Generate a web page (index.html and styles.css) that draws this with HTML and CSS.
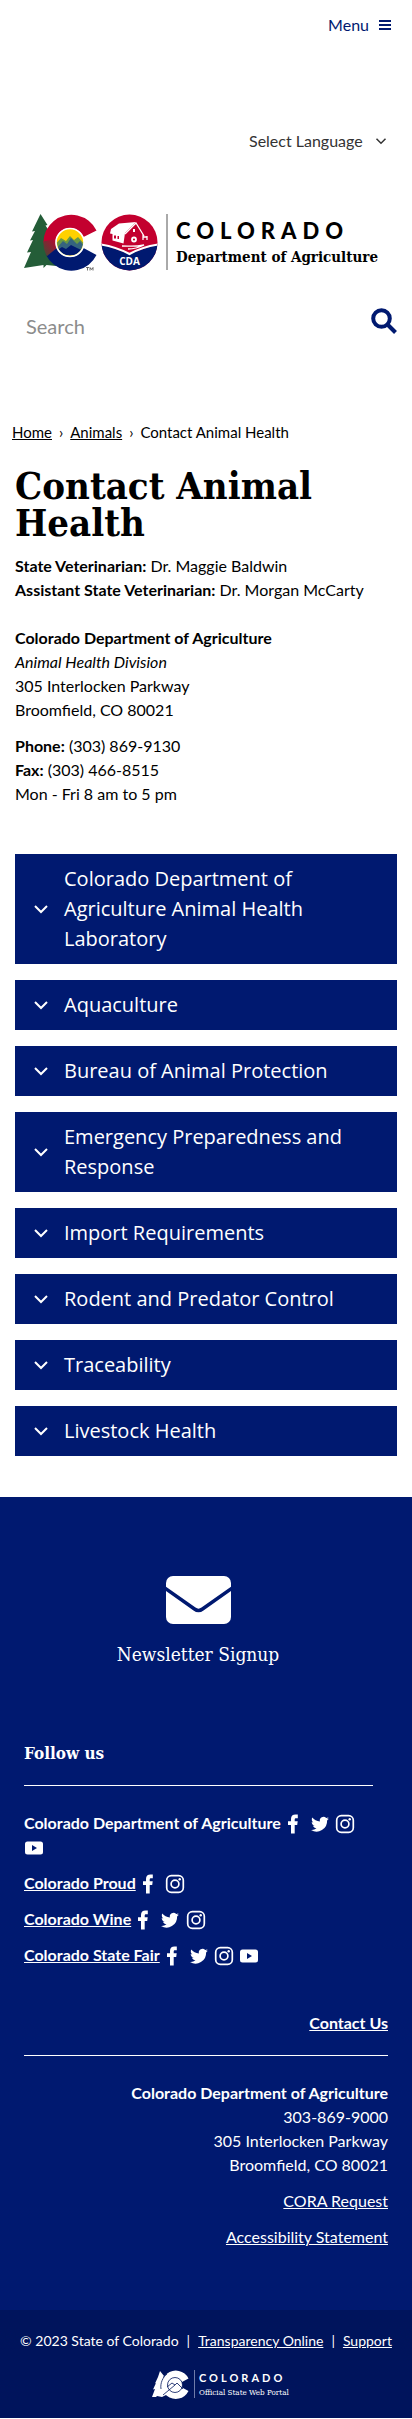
FILE: index.html
```html
<!DOCTYPE html>
<html lang="en">
<head>
<meta charset="utf-8">
<meta name="viewport" content="width=device-width, initial-scale=1">
<title>Contact Animal Health | Colorado Department of Agriculture</title>
<link rel="stylesheet" href="styles.css">
</head>
<body>
<svg class="sprite" aria-hidden="true">
  <symbol id="facebook" viewBox="0 0 20 20"><path d="M6 19.500V11H3V7.200h3V5C6 2 7.700.6 10.500.6h2.300v3.700h-1.700c-1 0-1.400.5-1.400 1.400v1.500h3l-.5 3.800H9.700v8.500z"/></symbol>
  <symbol id="twitter" viewBox="0 0 20 20"><path d="M19 4.600c-.7.300-1.400.5-2.100.6.800-.5 1.300-1.200 1.600-2-.7.400-1.500.7-2.300.9A3.700 3.700 0 0 0 9.900 7.500C6.800 7.300 4.100 5.900 2.300 3.600c-1 1.700-.5 3.900 1.100 4.900-.6 0-1.200-.2-1.700-.5 0 1.800 1.300 3.400 3 3.700-.5.100-1.100.2-1.700.1.500 1.400 1.800 2.500 3.500 2.500A7.500 7.500 0 0 1 1 15.900a10.500 10.500 0 0 0 16.100-9.400c.7-.5 1.400-1.100 1.900-1.900z"/></symbol>
  <symbol id="instagram" viewBox="0 0 20 20"><g fill="none" stroke="currentColor" stroke-width="1.700"><rect x="1.700" y="1.700" width="16.600" height="16.600" rx="4.600"/><circle cx="10" cy="10" r="3.900"/></g><circle cx="14.700" cy="5.300" r="1.200"/></symbol>
  <symbol id="youtube" viewBox="0 0 20 20"><path fill-rule="evenodd" d="M3.500 3.500h13a2.500 2.500 0 0 1 2.500 2.500v8a2.500 2.500 0 0 1-2.500 2.500h-13A2.500 2.500 0 0 1 1 14V6a2.500 2.500 0 0 1 2.500-2.500zM8 7v6l5-3z"/></symbol>
  <symbol id="chevron" viewBox="0 0 16 16"><path d="M2 5l6 6 6-6" fill="none" stroke="currentColor" stroke-width="2"/></symbol>
</svg>

<header class="header">
  <div class="topbar">
    <button class="menu" type="button">Menu
      <svg class="menu-icon" viewBox="0 0 12 12" aria-hidden="true"><path d="M0 2h12M0 6h12M0 10h12" stroke="currentColor" stroke-width="2"/></svg>
    </button>
  </div>
  <div class="language">
    <select aria-label="Select Language"><option>Select Language</option></select>
    <svg class="language-icon" aria-hidden="true"><use href="#chevron"/></svg>
  </div>
  <a class="brand" href="#">
    <svg class="brand-logo" viewBox="0 0 354 58" role="img" aria-label="Colorado Department of Agriculture">
      <defs>
        <clipPath id="c-inner"><circle cx="46" cy="28.500" r="13"/></clipPath>
        <clipPath id="c-ring"><path d="M72.500 16.500A28 28 0 1 0 72.500 41L59.500 34A14.500 14.500 0 1 1 59.500 23z"/></clipPath>
        <clipPath id="cda"><circle cx="105.500" cy="28.500" r="28"/></clipPath>
        <linearGradient id="fade" x1="0" y1="1" x2="1" y2="0"><stop offset="0" stop-color="#245d38"/><stop offset="1" stop-color="#c3002f"/></linearGradient>
      </defs>
      <path fill="#245d38" d="M16.500 0l7 11-2 .5 6 9-3 1 8 12 8 17-8 1.500-10-1-3 3v-3L0 54l7-16-4 .5 6-12.500-3 .5 5-9.500-3 .5z"/>
      <g clip-path="url(#c-ring)">
        <path fill="#c3002f" d="M17 0h60v28.500H17z"/>
        <path fill="#001970" d="M17 58V44l14-12 46-3.500V58z"/>
        <path fill="url(#fade)" d="M17 47V28l14-3 3 8z"/>
      </g>
      <circle cx="46" cy="28.500" r="14" fill="#ffd100"/>
      <g clip-path="url(#c-inner)">
        <path fill="#6b9a45" d="M30 32l7-8 5 3 4-5 4 4 4-3 9 10v6H30z"/>
        <path fill="#35647e" d="M30 37l9-10 4 3 4-6 6 6 3-3 8 10v4H30z"/>
        <path fill="#001970" d="M30 38l8-5 4 2 5-4 6 3 9 4v8H30z"/>
      </g>
      <circle cx="46" cy="28.500" r="14" fill="none" stroke="#fff" stroke-width="1.600"/>
      <path d="M62 53.500h3M63.500 53.500v3M66 56.500v-3l1.500 2 1.500-2v3" fill="none" stroke="#333" stroke-width=".7"/>
      <g clip-path="url(#cda)">
        <path fill="#c3002f" d="M77 0h57v58H77z"/>
        <path fill="#001970" d="M77 30l28.500 10L134 30v28H77z"/>
        <path d="M77 30.500c12 2 20 5 28.500 9.500 8-4.500 16-7.500 28.500-9.500" fill="none" stroke="#fff" stroke-width="2.200"/>
      </g>
      <path fill="#fff" d="M87 15l8-5.500 17-1.500-11 11-1.500 10.500-11-3V20l-2.500-.5z"/>
      <path d="M101 20l11-11 8 13M119 20v6M123 22v4M119 23h4M98 32c8 0 12 1 22-1-6 3-13 4-16 4" fill="none" stroke="#fff" stroke-width="1.300"/>
      <path d="M90 21.500h2v3h-2zM93.500 22h1.500v3h-1.500z" fill="#c3002f"/>
      <circle cx="110" cy="25.500" r="2" fill="none" stroke="#fff" stroke-width="1.800"/><path d="M110 15v3" stroke="#fff" stroke-width="2"/>
      <text class="logo-cda" x="105.500" y="51" text-anchor="middle">CDA</text>
      <path d="M143 0v56" stroke="#555" stroke-width="1"/>
      <text class="logo-state" x="152" y="25">COLORADO</text>
      <text class="logo-dept" x="152" y="48">Department of Agriculture</text>
    </svg>
  </a>
  <form class="search" role="search">
    <input type="search" placeholder="Search" aria-label="Search">
    <button type="submit" aria-label="Submit search">
      <svg viewBox="0 0 26 26" aria-hidden="true"><g fill="none" stroke="currentColor" stroke-width="4"><circle cx="10.500" cy="10.500" r="8.300"/><path d="M16.500 16.500l8 8"/></g></svg>
    </button>
  </form>
</header>

<nav class="breadcrumb" aria-label="Breadcrumb">
  <a href="#">Home</a><span>›</span><a href="#">Animals</a><span>›</span><span>Contact Animal Health</span>
</nav>

<main class="content">
  <h1>Contact Animal Health</h1>
  <p><strong>State Veterinarian:</strong> Dr. Maggie Baldwin<br><strong>Assistant State Veterinarian:</strong> Dr. Morgan McCarty</p>
  <address><strong>Colorado Department of Agriculture</strong><br><em>Animal Health Division</em><br>305 Interlocken Parkway<br>Broomfield, CO 80021</address>
  <p><strong>Phone:</strong> (303) 869-9130<br><strong>Fax:</strong> (303) 466-8515<br>Mon - Fri 8 am to 5 pm</p>

  <div class="accordion">
    <button type="button" aria-expanded="false"><svg aria-hidden="true"><use href="#chevron"/></svg><span>Colorado Department of Agriculture Animal Health Laboratory</span></button>
    <button type="button" aria-expanded="false"><svg aria-hidden="true"><use href="#chevron"/></svg><span>Aquaculture</span></button>
    <button type="button" aria-expanded="false"><svg aria-hidden="true"><use href="#chevron"/></svg><span>Bureau of Animal Protection</span></button>
    <button type="button" aria-expanded="false"><svg aria-hidden="true"><use href="#chevron"/></svg><span>Emergency Preparedness and Response</span></button>
    <button type="button" aria-expanded="false"><svg aria-hidden="true"><use href="#chevron"/></svg><span>Import Requirements</span></button>
    <button type="button" aria-expanded="false"><svg aria-hidden="true"><use href="#chevron"/></svg><span>Rodent and Predator Control</span></button>
    <button type="button" aria-expanded="false"><svg aria-hidden="true"><use href="#chevron"/></svg><span>Traceability</span></button>
    <button type="button" aria-expanded="false"><svg aria-hidden="true"><use href="#chevron"/></svg><span>Livestock Health</span></button>
  </div>
</main>

<footer class="footer">
  <a class="newsletter" href="#">
    <svg viewBox="0 0 65 48" aria-hidden="true"><rect width="65" height="48" rx="7" fill="#fff"/><path d="M-2 11.500L28.500 33Q32.500 36 36.500 33L67 11.500" fill="none" stroke="#001970" stroke-width="3.500"/></svg>
    <span>Newsletter Signup</span>
  </a>

  <section class="follow">
    <h2>Follow us</h2>
    <ul>
      <li><strong>Colorado Department of Agriculture</strong>
        <a href="#" aria-label="Facebook"><svg><use href="#facebook"/></svg></a>
        <a href="#" aria-label="Twitter"><svg><use href="#twitter"/></svg></a>
        <a href="#" aria-label="Instagram"><svg><use href="#instagram"/></svg></a>
        <a href="#" aria-label="YouTube"><svg><use href="#youtube"/></svg></a></li>
      <li><a class="name" href="#">Colorado Proud</a>
        <a href="#" aria-label="Facebook"><svg><use href="#facebook"/></svg></a>
        <a href="#" aria-label="Instagram"><svg><use href="#instagram"/></svg></a></li>
      <li><a class="name" href="#">Colorado Wine</a>
        <a href="#" aria-label="Facebook"><svg><use href="#facebook"/></svg></a>
        <a href="#" aria-label="Twitter"><svg><use href="#twitter"/></svg></a>
        <a href="#" aria-label="Instagram"><svg><use href="#instagram"/></svg></a></li>
      <li><a class="name" href="#">Colorado State Fair</a>
        <a href="#" aria-label="Facebook"><svg><use href="#facebook"/></svg></a>
        <a href="#" aria-label="Twitter"><svg><use href="#twitter"/></svg></a>
        <a href="#" aria-label="Instagram"><svg><use href="#instagram"/></svg></a>
        <a href="#" aria-label="YouTube"><svg><use href="#youtube"/></svg></a></li>
    </ul>
  </section>

  <section class="contact">
    <h2><a href="#">Contact Us</a></h2>
    <address><strong>Colorado Department of Agriculture</strong><br>303-869-9000<br>305 Interlocken Parkway<br>Broomfield, CO 80021</address>
    <p><a href="#">CORA Request</a></p>
    <p><a href="#">Accessibility Statement</a></p>
  </section>
</footer>

<div class="legal">
  <p><span>© 2023 State of Colorado</span><span>|</span><a href="#">Transparency Online</a><span>|</span><a href="#">Support</a></p>
  <a href="#">
    <svg class="portal-logo" viewBox="0 0 138 30" role="img" aria-label="Colorado Official State Web Portal">
      <path fill="#fff" d="M8 1l4 5-1 1 3 4 2 13-6 3-5-1-1 1H0l3-8-2 .5L4 13l-1 .5L6 7z"/>
      <path fill="#fff" d="M36.500 8.500A14.200 14.200 0 1 0 36.500 21L30 17.500V12z"/>
      <circle cx="23" cy="15" r="7.500" fill="#fff" stroke="#00145c" stroke-width=".8"/>
      <path d="M11 25l12-10 2-2 6 6M15 17l5-4 3 2M9 19c-1-6 2-12 6-15" fill="none" stroke="#00145c" stroke-width=".8"/>
      <path d="M42.500 0v28" stroke="#8c96bd" stroke-width=".8"/>
      <text class="portal-state" x="47" y="12">COLORADO</text>
      <text class="portal-name" x="47" y="25">Official State Web Portal</text>
    </svg>
  </a>
</div>
</body>
</html>
```
FILE: styles.css
```css
:root {
  --navy: #001970;
  --deep: #00145c;
  --sans: Lato, "Liberation Sans", sans-serif;
  --slab: "DejaVu Serif Condensed", "DejaVu Serif", serif;
}
* { box-sizing: border-box; }
body {
  margin: 0;
  background: #fff;
  color: #000;
  font: 16px/24px var(--sans);
}
a { color: inherit; }
button, input, select { font: inherit; color: inherit; background: none; border: 0; margin: 0; padding: 0; }
p, h1, h2, ul, address { margin: 0; padding: 0; }
address { font-style: normal; }
.sprite { position: absolute; width: 0; height: 0; }

.topbar { display: flex; justify-content: flex-end; padding: 13px 21px 0; }
.menu { display: flex; align-items: center; gap: 10px; color: var(--navy); line-height: 24px; }
.menu-icon { width: 12px; height: 12px; }
.language { display: flex; justify-content: flex-end; align-items: center; gap: 12px; margin-top: 92px; padding-right: 25px; color: #333; }
.language select { appearance: none; height: 24px; }
.language-icon { width: 12px; height: 12px; }
.brand { display: block; margin: 61px 12px 0 24px; }
.brand-logo { display: block; width: 100%; max-width: 354px; overflow: visible; }
.logo-cda { font: 700 10px "Open Sans", sans-serif; fill: #fff; }
.logo-state { font: 900 22px Lato, sans-serif; letter-spacing: 6px; }
.logo-dept { font: 700 15px "DejaVu Serif Condensed", serif; }
.search { display: flex; justify-content: space-between; align-items: flex-start; padding: 36px 15px 0 26px; }
.search input { flex: 1; min-width: 0; height: 36px; font-size: 20px; outline-offset: 2px; }
.search input::placeholder { color: #8c8c8c; opacity: 1; }
.search button { color: var(--navy); }
.search svg { display: block; width: 26px; height: 26px; }

.breadcrumb { display: flex; flex-wrap: wrap; gap: 7px; padding: 76px 12px 0; font-size: 15px; }
.content { padding: 23px 15px 41px; }
h1 { font: 700 38px/37px var(--slab); margin-bottom: 13px; }
.content address { margin: 24px 0 12px; }
.accordion { display: grid; gap: 16px; margin-top: 48px; }
.accordion button {
  display: flex;
  align-items: center;
  gap: 15px;
  padding: 10px 40px 10px 18px;
  background: var(--navy);
  color: #fff;
  font: 20px/30px "Open Sans", sans-serif;
  text-align: left;
}
.accordion svg { flex: none; width: 16px; height: 16px; }

.footer { background: var(--navy); color: #fff; padding: 79px 24px 61px; }
.newsletter { display: grid; justify-items: center; gap: 18px; margin-right: 16px; font: 19px/24px var(--slab); text-decoration: none; }
.newsletter svg { width: 65px; height: 48px; }
.follow { margin-right: 15px; padding-top: 75px; }
.follow h2 { font: 700 17px/24px var(--slab); padding-bottom: 20px; border-bottom: 1px solid #fff; }
.follow ul { display: grid; gap: 12px; list-style: none; padding-top: 25px; }
.follow li a { display: inline-block; text-decoration: none; }
.follow li .name { font-weight: 700; text-decoration: underline; }
.follow svg { display: block; width: 20px; height: 20px; margin: 0 1px -5px 0; fill: currentColor; }
.contact { text-align: right; padding-top: 44px; }
.contact h2 { font-size: 16px; padding-bottom: 20px; margin-bottom: 25px; border-bottom: 1px solid #fff; }
.contact p { margin-top: 12px; }

.legal { background: var(--deep); color: #fff; padding: 19px 15px 18px; font-size: 14px; }
.legal p { display: flex; flex-wrap: wrap; justify-content: center; gap: 8px; }
.legal > a { display: block; width: fit-content; margin: 17px auto 0; padding-left: 30px; }
.portal-logo { display: block; width: 138px; fill: #fff; overflow: visible; }
.portal-state { font: 700 11px Lato, sans-serif; letter-spacing: 3px; }
.portal-name { font: 8px "DejaVu Serif Condensed", serif; }
```
